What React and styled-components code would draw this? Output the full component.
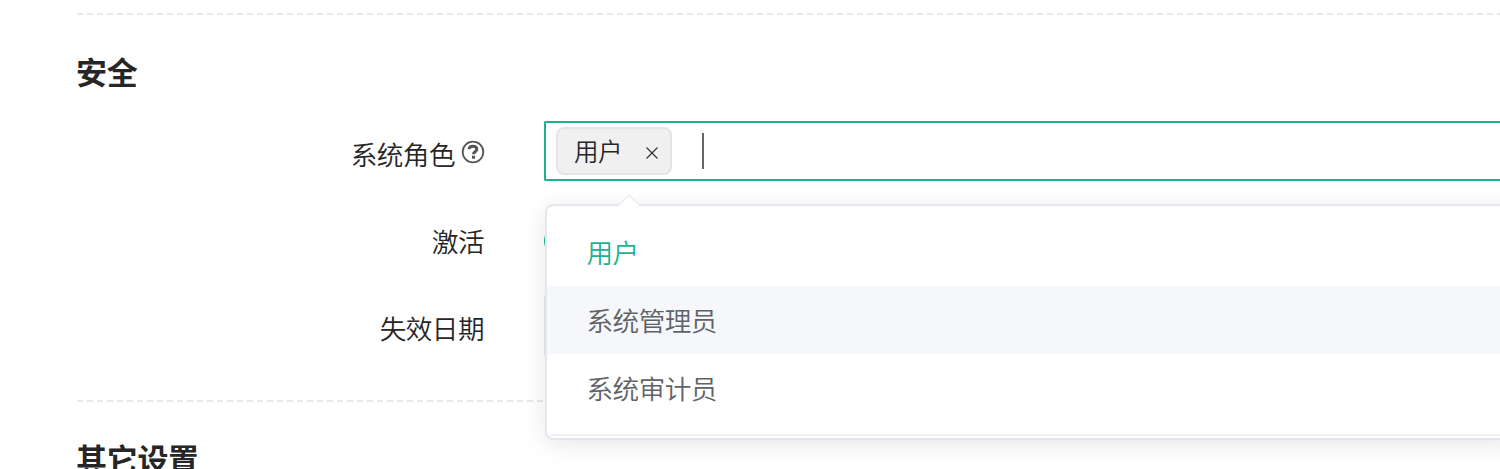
import React from "react";
import styled, { createGlobalStyle, css } from "styled-components";

const GlobalStyle = createGlobalStyle`
  * { box-sizing: border-box; }
  html, body { margin: 0; background: #fff; overflow: hidden; }
  body {
    font-family: "Noto Sans CJK SC", "Noto Sans", sans-serif;
    color: #262626;
  }
`;

const Page = styled.main`
  height: 469px;
  padding: 13px 0 0 77px;
  overflow: hidden;
`;

const Divider = styled.div`
  height: 2px;
  background: repeating-linear-gradient(90deg, #e7eaec 0 6px, transparent 6px 10px);
`;

const Section = styled.section`
  height: 387px;
`;

const Heading = styled.h3`
  margin: 0 0 0 -1px;
  padding-top: 34px;
  height: 106px;
  font-size: 31px;
  letter-spacing: -0.3px;
  line-height: 44px;
  font-weight: 700;
  white-space: nowrap;
`;

const Row = styled.div`
  display: flex;
  height: 60px;
  margin-bottom: 27px;
`;

const Label = styled.div`
  display: flex;
  justify-content: flex-end;
  flex: none;
  width: 407px;
  margin-right: 60px;
  padding-top: 13px;
  font-size: 26.6px;
  letter-spacing: -0.5px;
  line-height: 40px;
  font-weight: 350;
`;

const HelpIcon = styled.svg`
  flex: none;
  width: 24px;
  height: 24px;
  margin: 6px -1px 0 6px;
`;

const Field = styled.div`
  position: relative;
  flex: 1;
  min-width: 0;
`;

const SelectBox = styled.div`
  display: flex;
  height: 60px;
  padding: 4px 0 0 10px;
  border: 2px solid #1ab394;
  border-right: 0;
  border-radius: 2px 0 0 2px;
`;

const Tag = styled.span`
  display: flex;
  align-items: center;
  width: 116px;
  height: 48px;
  padding: 0 12px 0 16px;
  justify-content: space-between;
  border: 2px solid #e4e4e4;
  border-radius: 8px;
  background: #f0f0f0;
  font-size: 24.5px;
  letter-spacing: -0.5px;
  font-weight: 350;
  line-height: 44px;
`;

const CloseIcon = styled.svg`
  width: 12px;
  height: 12px;
  margin-top: 4px;
`;

const Caret = styled.span`
  width: 2px;
  height: 36px;
  margin: 6px 0 0 30px;
  background: #666;
`;

const Radio = styled.div`
  width: 28px;
  height: 28px;
  margin-top: 19px;
  border: 2px solid #1ab394;
  border-radius: 50%;
`;

const DateInput = styled.div`
  height: 60px;
  border: 2px solid #e5e6e7;
  border-right: 0;
  border-radius: 2px 0 0 2px;
`;

const Dropdown = styled.div`
  position: absolute;
  z-index: 2;
  top: 83px;
  left: 1px;
  right: -20px;
  height: 236px;
  padding-top: 12px;
  border: 2px solid #e4e7ed;
  border-radius: 8px;
  background: #fff;
  box-shadow: 0 4px 24px rgba(0, 0, 0, 0.1);
`;

const Arrow = styled.svg`
  position: absolute;
  top: -12px;
  left: 70px;
  width: 24px;
  height: 13px;
`;

const Option = styled.div`
  height: 68px;
  padding-left: 39.5px;
  font-size: 26.6px;
  letter-spacing: -0.5px;
  line-height: 68px;
  color: #606266;
  font-weight: 350;
  ${({ $hovered }) => $hovered && css`background: #f5f7fa;`}
  ${({ $selected }) => $selected && css`color: #1ab394;`}
`;

const MenuFooter = styled.div`
  height: 4px;
  margin: 12px 0 0 2px;
  border-top: 2px solid #f0f0f0;
  border-left: 2px solid transparent;
  border-radius: 8px 0 0 0;
`;

const options = [
  { label: "用户", selected: true },
  { label: "系统管理员", hovered: true },
  { label: "系统审计员" },
];

export default function App() {
  return (
    <>
      <GlobalStyle />
      <Page>
        <Section>
          <Divider />
          <Heading>安全</Heading>
          <Row>
            <Label>
              系统角色
              <HelpIcon viewBox="0 0 24 24" fill="none" stroke="#555">
                <circle cx="12" cy="12" r="10.3" strokeWidth="1.8" />
                <path d="M8 9.2C8.2 7.2 9.6 6.2 12 6.2c2.5 0 3.8 1.1 3.8 3 0 2.6-3.3 2.6-3.3 5" strokeWidth="3" />
                <path d="M11 17.2h3.1" strokeWidth="3" />
              </HelpIcon>
            </Label>
            <Field>
              <SelectBox>
                <Tag>
                  用户
                  <CloseIcon viewBox="0 0 12 12" stroke="#333" strokeWidth="1.2">
                    <path d="M.5 .5l11 11M11.5 .5l-11 11" />
                  </CloseIcon>
                </Tag>
                <Caret />
              </SelectBox>
              <Dropdown>
                <Arrow viewBox="0 0 24 13">
                  <path d="M0 13L12 1.5L24 13Z" fill="#fff" />
                  <path d="M1 11.5L12 1.5L23 11.5" fill="none" stroke="#ebeef5" strokeWidth="1.6" />
                </Arrow>
                {options.map((o) => (
                  <Option key={o.label} $selected={o.selected} $hovered={o.hovered}>
                    {o.label}
                  </Option>
                ))}
                <MenuFooter />
              </Dropdown>
            </Field>
          </Row>
          <Row>
            <Label>激活</Label>
            <Field><Radio /></Field>
          </Row>
          <Row>
            <Label>失效日期</Label>
            <Field><DateInput /></Field>
          </Row>
        </Section>
        <Section>
          <Divider />
          <Heading>其它设置</Heading>
        </Section>
      </Page>
    </>
  );
}
